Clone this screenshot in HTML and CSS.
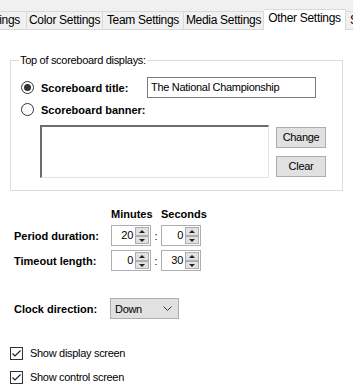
FILE: index.html
```html
<!DOCTYPE html>
<html lang="en">
<head>
    <meta charset="UTF-8">
    <title>Other Settings</title>
    <link rel="stylesheet" href="styles.css">
</head>
<body>
    <div class="tabs">
        <div class="tab tab-cut">Settings</div>
        <div class="tab tab-color">Color Settings</div>
        <div class="tab tab-team">Team Settings</div>
        <div class="tab tab-media">Media Settings</div>
        <div class="tab tab-other active">Other Settings</div>
        <div class="tab tab-sound">Sound Settings</div>
    </div>

    <div class="page">
        <fieldset class="group">
            <legend>Top of scoreboard displays:</legend>
            <div class="option-row title-row">
                <span class="radio checked"></span>
                <span class="bold-label title-label">Scoreboard title:</span>
                <div class="textbox">The National Championship</div>
            </div>
            <div class="option-row banner-option">
                <span class="radio"></span>
                <span class="bold-label">Scoreboard banner:</span>
            </div>
            <div class="banner-row">
                <div class="banner"></div>
                <div class="banner-buttons">
                    <div class="button">Change</div>
                    <div class="button">Clear</div>
                </div>
            </div>
        </fieldset>

        <div class="times">
            <span></span>
            <span class="bold-label head">Minutes</span>
            <span></span>
            <span class="bold-label head">Seconds</span>

            <span class="bold-label">Period duration:</span>
            <div class="spin"><span class="spin-value">20</span><span class="spin-btns"><i class="up"></i><i class="down"></i></span></div>
            <span class="colon">:</span>
            <div class="spin"><span class="spin-value">0</span><span class="spin-btns"><i class="up"></i><i class="down"></i></span></div>

            <span class="bold-label">Timeout length:</span>
            <div class="spin"><span class="spin-value">0</span><span class="spin-btns"><i class="up"></i><i class="down"></i></span></div>
            <span class="colon">:</span>
            <div class="spin"><span class="spin-value">30</span><span class="spin-btns"><i class="up"></i><i class="down"></i></span></div>
        </div>

        <div class="clock-row">
            <span class="bold-label clock-label">Clock direction:</span>
            <div class="dropdown">
                <span>Down</span>
                <svg width="9" height="5" viewBox="0 0 9 5"><path d="M0.5 0.5 L4.5 4.5 L8.5 0.5" fill="none" stroke="#333" stroke-width="1"/></svg>
            </div>
        </div>

        <div class="checks">
            <div class="check-row"><span class="checkbox"><svg width="11" height="11" viewBox="0 0 11 11"><path d="M1.5 5.5 L4 8 L9.5 2.5" fill="none" stroke="#222" stroke-width="1.2"/></svg></span>Show display screen</div>
            <div class="check-row"><span class="checkbox"><svg width="11" height="11" viewBox="0 0 11 11"><path d="M1.5 5.5 L4 8 L9.5 2.5" fill="none" stroke="#222" stroke-width="1.2"/></svg></span>Show control screen</div>
        </div>
    </div>
</body>
</html>
```

FILE: styles.css
```css
body {
    margin: 0;
    width: 353px;
    height: 392px;
    overflow: hidden;
    background-color: #fff;
    color: #000;
    font-family: "Liberation Sans", Arial, sans-serif;
    font-size: 11px;
    letter-spacing: -0.3px;
}

/* tab strip */
.tabs {
    display: flex;
    align-items: flex-end;
    height: 30px;
    margin-left: -50px;
    background-color: #f0f0f0;
}
.tab {
    box-sizing: border-box;
    flex: none;
    height: 19px;
    border: 1px solid #d9d9d9;
    border-left: none;
    background-color: #f0f0f0;
    font-size: 12px;
    line-height: 17px;
    text-align: center;
    white-space: nowrap;
    overflow: hidden;
}
.tab-cut {
    width: 77px;
    text-align: right;
    padding-right: 6px;
}
.tab-color { width: 76px; }
.tab-team { width: 81px; }
.tab-media { width: 80px; }
.tab-other { width: 82px; }
.tab-sound {
    width: 80px;
    text-align: left;
    padding-left: 4px;
}
.tab.active {
    height: 21px;
    background-color: #fff;
    border-bottom: none;
}

.page {
    padding-left: 10px;
}

/* group box */
.group {
    box-sizing: border-box;
    width: 333px;
    height: 137px;
    margin: 24px 0 0 0;
    padding: 0 0 0 10px;
    border: 1px solid #dcdcdc;
}
.group legend {
    padding: 0 2px 0 1px;
    margin-left: -2px;
    line-height: 13px;
}
.bold-label {
    font-weight: bold;
    letter-spacing: 0;
}
.option-row {
    display: flex;
    align-items: center;
    height: 21px;
}
.title-row {
    margin-top: 10px;
}
.banner-option {
    margin-top: 1px;
}
.radio {
    box-sizing: border-box;
    width: 13px;
    height: 13px;
    margin-right: 7px;
    border: 1px solid #333;
    border-radius: 50%;
    display: flex;
    align-items: center;
    justify-content: center;
}
.radio.checked::after {
    content: "";
    width: 7px;
    height: 7px;
    border-radius: 50%;
    background-color: #333;
}
.title-label {
    width: 106px;
}
.textbox {
    box-sizing: border-box;
    width: 169px;
    height: 21px;
    padding: 0 0 0 3px;
    border: 1px solid #7a7a7a;
    line-height: 19px;
}

.banner-row {
    display: flex;
    margin-top: 5px;
    margin-left: 19px;
}
.banner {
    box-sizing: border-box;
    width: 229px;
    height: 53px;
    border-top: 2px solid #6d6d6d;
    border-left: 2px solid #6d6d6d;
    border-right: 1px solid #e3e3e3;
    border-bottom: 1px solid #e3e3e3;
}
.banner-buttons {
    display: flex;
    flex-direction: column;
    gap: 8px;
    margin-left: 7px;
    margin-top: 2px;
}
.button {
    box-sizing: border-box;
    width: 50px;
    height: 21px;
    border: 1px solid #adadad;
    background-color: #e1e1e1;
    line-height: 19px;
    text-align: center;
}

/* time settings */
.times {
    display: grid;
    grid-template-columns: 97px 40px 10px 40px;
    grid-template-rows: 14px 21px 21px;
    row-gap: 4px;
    align-items: center;
    margin-top: 16px;
    margin-left: 4px;
}
.times .head {
    text-align: center;
}
.colon {
    text-align: center;
}
.spin {
    box-sizing: border-box;
    display: flex;
    height: 21px;
    border: 1px solid #abadb3;
    padding: 1px;
}
.spin-value {
    flex: 1;
    text-align: right;
    padding-right: 2px;
    line-height: 17px;
}
.spin-btns {
    display: flex;
    flex-direction: column;
    width: 14px;
}
.spin-btns i {
    flex: 1;
    box-sizing: border-box;
    border: 1px solid #adadad;
    background-color: #e1e1e1;
    position: relative;
}
.spin-btns i::after {
    content: "";
    position: absolute;
    left: 3px;
    width: 0;
    height: 0;
    border-left: 3px solid transparent;
    border-right: 3px solid transparent;
}
.spin-btns .up::after {
    top: 2px;
    border-bottom: 3px solid #222;
}
.spin-btns .down::after {
    top: 2px;
    border-top: 3px solid #222;
}

/* clock direction */
.clock-row {
    display: flex;
    align-items: center;
    margin-top: 27px;
    margin-left: 4px;
}
.clock-label {
    width: 96px;
}
.dropdown {
    box-sizing: border-box;
    display: flex;
    align-items: center;
    justify-content: space-between;
    width: 69px;
    height: 21px;
    padding: 0 6px 0 4px;
    border: 1px solid #adadad;
    background-color: #e1e1e1;
}

/* checkboxes */
.checks {
    margin-top: 22px;
}
.check-row {
    display: flex;
    align-items: center;
    height: 24px;
}
.checkbox {
    box-sizing: border-box;
    width: 13px;
    height: 13px;
    margin-right: 7px;
    border: 1px solid #333;
    display: flex;
    align-items: center;
    justify-content: center;
}
```
